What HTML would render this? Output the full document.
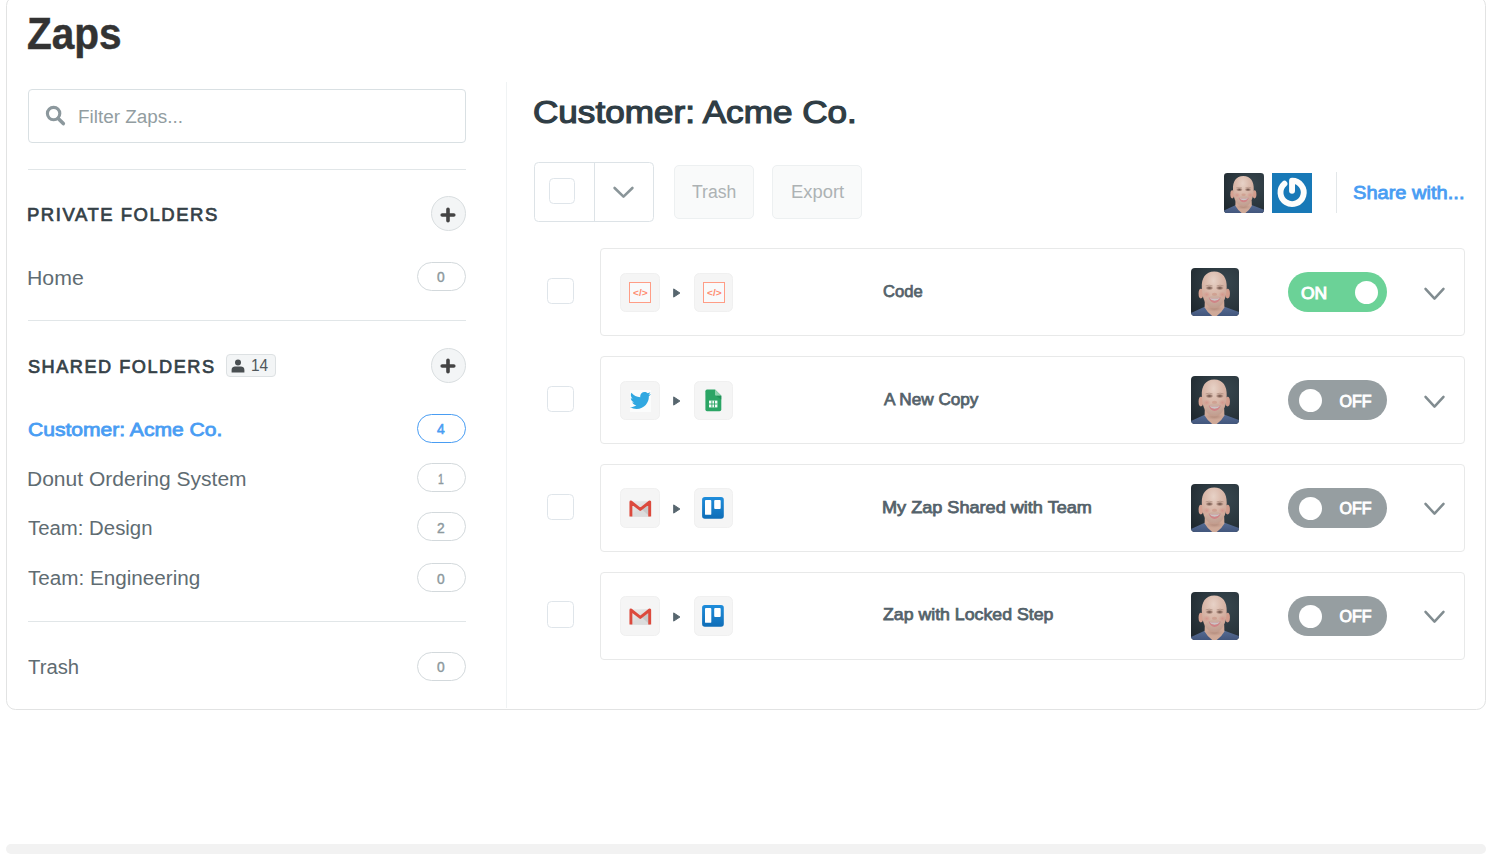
<!DOCTYPE html>
<html lang="en">
<head>
<meta charset="utf-8">
<title>Zaps</title>
<style>
html,body{margin:0;padding:0;background:#fff;}
body{width:1498px;height:856px;position:relative;overflow:hidden;font-family:"Liberation Sans",sans-serif;}
.abs,.t,.card,.hr,.vr,.plus,.badge,.cb,.row,.app,.tog,.knob,.btn,.bar,svg{position:absolute;box-sizing:border-box;}
.t{white-space:nowrap;line-height:1;transform-origin:0 0;}
.card{left:6px;top:-4px;width:1479.8px;height:714px;border:1.9px solid #e2e3e3;border-radius:9.5px;background:#fff;}
.hr{left:28px;width:438px;height:1.4px;background:#e1e6e8;}
.vr{left:505.9px;top:82px;width:1.3px;height:626px;background:#f0f3f4;}
.search{left:28px;top:89px;width:438px;height:54px;border:1.3px solid #d9e0e3;border-radius:4px;background:#fff;}
.plus{left:431px;width:35px;height:35px;border-radius:50%;background:#f3f5f6;border:1.2px solid #d9dee0;}
.badge{left:416.8px;width:49px;height:29.3px;border-radius:15px;border:1.3px solid #d3d9dc;background:#fff;}
.badge.act{border:1.6px solid #499df3;}
.cb{width:26.6px;height:26.6px;border:1.6px solid #dfe5ea;border-radius:4.5px;background:#fff;}
.row{left:600.1px;width:865.1px;height:88.3px;border:1.8px solid #e8e9e9;border-radius:4px;background:#fff;}
.app{width:39.4px;height:39.4px;border-radius:5.5px;background:#f5f5f5;border:1px solid #f0f0f0;}
.tog{left:1288px;width:99px;height:40px;border-radius:20px;background:#969ea1;}
.tog.on{background:#6bd297;}
.knob{width:23px;height:23px;border-radius:50%;background:#fff;}
.btn{top:164.8px;height:54px;border-radius:5px;background:#f9fafa;border:1.4px solid #edf0f1;}
.bar{left:6px;top:844px;width:1480px;height:10px;border-radius:5px;background:#f2f2f2;}
</style>
</head>
<body>
<div class="card"></div>
<div class="vr"></div>
<div class="bar"></div>
<div class="search abs"></div>
<svg style="left:44px;top:104px" width="24" height="24" viewBox="0 0 24 24"><circle cx="9.6" cy="9.6" r="6.2" fill="none" stroke="#8c989d" stroke-width="3.1"/><path d="M14.2 14.4 L19.3 19.6" stroke="#8c989d" stroke-width="3.6" stroke-linecap="round"/></svg>
<div class="hr" style="top:168.6px"></div>
<div class="hr" style="top:320px"></div>
<div class="hr" style="top:621px"></div>
<div class="plus" style="top:196.2px"></div>
<svg style="left:440px;top:206.5px" width="16" height="16" viewBox="0 0 16 16"><path d="M8 2.2V13.8M2.2 8H13.8" stroke="#444" stroke-width="3.6" stroke-linecap="round"/></svg>
<div class="plus" style="top:348px"></div>
<svg style="left:440px;top:358.3px" width="16" height="16" viewBox="0 0 16 16"><path d="M8 2.2V13.8M2.2 8H13.8" stroke="#444" stroke-width="3.6" stroke-linecap="round"/></svg>
<div class="badge" style="top:261.7px"></div>
<div class="badge act" style="top:413.6px"></div>
<div class="badge" style="top:463.1px"></div>
<div class="badge" style="top:512.1px"></div>
<div class="badge" style="top:563.1px"></div>
<div class="badge" style="top:651.7px"></div>
<div class="abs" style="left:225.5px;top:354.3px;width:50px;height:23px;background:#f3f5f6;border:1.2px solid #dde1e3;border-radius:4px"></div>
<svg style="left:231px;top:358.5px" width="14" height="14" viewBox="0 0 14 14"><circle cx="7" cy="3.6" r="3" fill="#4a4f52"/><path d="M0.6 13.4 V11 C0.6 8.6 2.4 7.6 4 7.6 H10 C11.6 7.6 13.4 8.6 13.4 11 V13.4 Z" fill="#4a4f52"/></svg>

<div class="abs" style="left:534px;top:162.1px;width:119.6px;height:59.8px;border:1.6px solid #dde3e7;border-radius:4.5px;background:#fff"></div>
<div class="abs" style="left:593.6px;top:163px;width:1.5px;height:58px;background:#dde3e7"></div>
<div class="cb" style="left:548.6px;top:177.9px"></div>
<svg style="left:611px;top:184px" width="25" height="17" viewBox="0 0 25 17"><path d="M3.6 4 L12.5 12.6 L21.4 4" fill="none" stroke="#8a9599" stroke-width="2.6" stroke-linecap="round" stroke-linejoin="round"/></svg>
<div class="btn" style="left:673.8px;width:80.6px"></div>
<div class="btn" style="left:772.3px;width:89.8px"></div>
<div class="abs" style="left:1335.8px;top:172.4px;width:1.2px;height:40.2px;background:#e3e7e9"></div>
<svg style="left:1224.2px;top:172.7px" width="40" height="40" viewBox="0 0 48 48">
<defs><clipPath id="ch"><rect x="0" y="0" width="48" height="48" rx="4" ry="4"/></clipPath>
<radialGradient id="gh" cx="0.7" cy="0.3" r="0.85"><stop offset="0" stop-color="#37464e"/><stop offset="0.6" stop-color="#2b373e"/><stop offset="1" stop-color="#20292f"/></radialGradient>
<radialGradient id="sh" cx="0.47" cy="0.24" r="0.8"><stop offset="0" stop-color="#e7d2c7"/><stop offset="0.35" stop-color="#dcbdaf"/><stop offset="0.75" stop-color="#d0aa9b"/><stop offset="1" stop-color="#bd9687"/></radialGradient>
<radialGradient id="eh"><stop offset="0" stop-color="#5e443b" stop-opacity="0.95"/><stop offset="0.55" stop-color="#7a5a4f" stop-opacity="0.6"/><stop offset="1" stop-color="#a88171" stop-opacity="0"/></radialGradient>
<radialGradient id="kh"><stop offset="0" stop-color="#d48e86" stop-opacity="0.75"/><stop offset="1" stop-color="#d69b8f" stop-opacity="0"/></radialGradient>
<radialGradient id="nh"><stop offset="0" stop-color="#a47c6d" stop-opacity="0.75"/><stop offset="1" stop-color="#b98f80" stop-opacity="0"/></radialGradient>
<linearGradient id="th" x1="0" y1="0" x2="0" y2="1"><stop offset="0" stop-color="#566c94"/><stop offset="1" stop-color="#3e5177"/></linearGradient></defs>
<g clip-path="url(#ch)"><rect width="48" height="48" fill="url(#gh)"/>
<path d="M-2 50 L-1 45.6 Q7 41.6 14.2 38.4 L23.6 46 L33 38.4 Q40.6 41.2 49 44.4 L50 50 Z" fill="url(#th)"/>
<path d="M13.8 33 L13.6 39.4 Q17 45.5 23.4 49.5 Q30.2 45.5 33.4 39.4 L33.2 33 Z" fill="#cfa998"/>
<ellipse cx="23.4" cy="40.6" rx="9.4" ry="3.4" fill="url(#nh)"/>
<ellipse cx="9.9" cy="25.6" rx="2.3" ry="4.9" fill="#d6a292"/>
<ellipse cx="36.6" cy="25.6" rx="2.3" ry="4.9" fill="#d29c8c"/>
<path d="M23.2 3.6 C14.4 3.6 10.4 10.4 10.8 19.6 C11.1 27.8 12.6 33 16.2 37 C18.8 39.9 21.4 40.8 23.3 40.8 C25.2 40.8 27.9 39.9 30.4 37 C33.9 33 35.4 27.8 35.7 19.6 C36.1 10.4 32 3.6 23.2 3.6 Z" fill="url(#sh)"/>
<ellipse cx="18.4" cy="20" rx="4.2" ry="2.3" fill="url(#eh)"/>
<ellipse cx="28.8" cy="20" rx="4.2" ry="2.3" fill="url(#eh)"/>
<path d="M14.6 17.9 Q18.2 16.5 21.6 17.9 M25.6 17.9 Q29 16.5 32.6 17.9" stroke="#8a6a5c" stroke-width="0.8" fill="none" opacity="0.55"/>
<ellipse cx="15.8" cy="26.6" rx="4" ry="3.4" fill="url(#kh)"/>
<ellipse cx="31.4" cy="26.6" rx="4" ry="3.4" fill="url(#kh)"/>
<ellipse cx="23.5" cy="26.2" rx="2.6" ry="1.5" fill="#c98f7f" opacity="0.55"/>
<ellipse cx="23.6" cy="33.2" rx="8.4" ry="5.6" fill="#b7a097" opacity="0.28"/>
<path d="M17.6 29.6 Q23.6 31.4 29.8 29.6 Q27.8 35 23.6 35 Q19.6 35 17.6 29.6 Z" fill="#cf8487"/>
<path d="M18.4 29.9 Q23.6 31.3 29 29.9 Q27 32.7 23.6 32.7 Q20.4 32.7 18.4 29.9 Z" fill="#ccc4c5"/>
</g></svg><svg style="left:1272.2px;top:172.5px" width="40.1" height="40.1" viewBox="0 0 40 40"><rect width="40" height="40" fill="#1879b7"/><path d="M20.0 17.8 V7.8 A11.6 11.6 0 1 1 12.4 10.7" fill="none" stroke="#fdfdfb" stroke-width="5.9" stroke-linecap="round" stroke-linejoin="round"/></svg>
<div class="cb" style="left:547.4px;top:277.90px"></div>
<div class="row" style="top:248.10px"></div>
<div class="app" style="left:620.4px;top:272.80px"></div>
<div class="abs" style="left:629.3px;top:281.60px;width:21.9px;height:21.7px;border:1.3px solid #ff9d86;background:#f9fafb"></div><span class="t" style="left:633.1px;top:288.70px;font-size:9px;font-weight:700;color:#ff8c70;letter-spacing:0px;transform:scaleX(1.12)">&lt;/&gt;</span>
<svg style="left:672px;top:287.1px" width="10" height="12" viewBox="0 0 10 12"><path d="M1.7 1.9 L7.9 6 L1.7 10.1 Z" fill="#57666e" stroke="#57666e" stroke-width="1" stroke-linejoin="round"/></svg>
<div class="app" style="left:693.8px;top:272.80px"></div>
<div class="abs" style="left:702.6999999999999px;top:281.60px;width:21.9px;height:21.7px;border:1.3px solid #ff9d86;background:#f9fafb"></div><span class="t" style="left:706.5px;top:288.70px;font-size:9px;font-weight:700;color:#ff8c70;letter-spacing:0px;transform:scaleX(1.12)">&lt;/&gt;</span>
<svg style="left:1191px;top:268.4px" width="48" height="48" viewBox="0 0 48 48">
<defs><clipPath id="cr0"><rect x="0" y="0" width="48" height="48" rx="4" ry="4"/></clipPath>
<radialGradient id="gr0" cx="0.7" cy="0.3" r="0.85"><stop offset="0" stop-color="#37464e"/><stop offset="0.6" stop-color="#2b373e"/><stop offset="1" stop-color="#20292f"/></radialGradient>
<radialGradient id="sr0" cx="0.47" cy="0.24" r="0.8"><stop offset="0" stop-color="#e7d2c7"/><stop offset="0.35" stop-color="#dcbdaf"/><stop offset="0.75" stop-color="#d0aa9b"/><stop offset="1" stop-color="#bd9687"/></radialGradient>
<radialGradient id="er0"><stop offset="0" stop-color="#5e443b" stop-opacity="0.95"/><stop offset="0.55" stop-color="#7a5a4f" stop-opacity="0.6"/><stop offset="1" stop-color="#a88171" stop-opacity="0"/></radialGradient>
<radialGradient id="kr0"><stop offset="0" stop-color="#d48e86" stop-opacity="0.75"/><stop offset="1" stop-color="#d69b8f" stop-opacity="0"/></radialGradient>
<radialGradient id="nr0"><stop offset="0" stop-color="#a47c6d" stop-opacity="0.75"/><stop offset="1" stop-color="#b98f80" stop-opacity="0"/></radialGradient>
<linearGradient id="tr0" x1="0" y1="0" x2="0" y2="1"><stop offset="0" stop-color="#566c94"/><stop offset="1" stop-color="#3e5177"/></linearGradient></defs>
<g clip-path="url(#cr0)"><rect width="48" height="48" fill="url(#gr0)"/>
<path d="M-2 50 L-1 45.6 Q7 41.6 14.2 38.4 L23.6 46 L33 38.4 Q40.6 41.2 49 44.4 L50 50 Z" fill="url(#tr0)"/>
<path d="M13.8 33 L13.6 39.4 Q17 45.5 23.4 49.5 Q30.2 45.5 33.4 39.4 L33.2 33 Z" fill="#cfa998"/>
<ellipse cx="23.4" cy="40.6" rx="9.4" ry="3.4" fill="url(#nr0)"/>
<ellipse cx="9.9" cy="25.6" rx="2.3" ry="4.9" fill="#d6a292"/>
<ellipse cx="36.6" cy="25.6" rx="2.3" ry="4.9" fill="#d29c8c"/>
<path d="M23.2 3.6 C14.4 3.6 10.4 10.4 10.8 19.6 C11.1 27.8 12.6 33 16.2 37 C18.8 39.9 21.4 40.8 23.3 40.8 C25.2 40.8 27.9 39.9 30.4 37 C33.9 33 35.4 27.8 35.7 19.6 C36.1 10.4 32 3.6 23.2 3.6 Z" fill="url(#sr0)"/>
<ellipse cx="18.4" cy="20" rx="4.2" ry="2.3" fill="url(#er0)"/>
<ellipse cx="28.8" cy="20" rx="4.2" ry="2.3" fill="url(#er0)"/>
<path d="M14.6 17.9 Q18.2 16.5 21.6 17.9 M25.6 17.9 Q29 16.5 32.6 17.9" stroke="#8a6a5c" stroke-width="0.8" fill="none" opacity="0.55"/>
<ellipse cx="15.8" cy="26.6" rx="4" ry="3.4" fill="url(#kr0)"/>
<ellipse cx="31.4" cy="26.6" rx="4" ry="3.4" fill="url(#kr0)"/>
<ellipse cx="23.5" cy="26.2" rx="2.6" ry="1.5" fill="#c98f7f" opacity="0.55"/>
<ellipse cx="23.6" cy="33.2" rx="8.4" ry="5.6" fill="#b7a097" opacity="0.28"/>
<path d="M17.6 29.6 Q23.6 31.4 29.8 29.6 Q27.8 35 23.6 35 Q19.6 35 17.6 29.6 Z" fill="#cf8487"/>
<path d="M18.4 29.9 Q23.6 31.3 29 29.9 Q27 32.7 23.6 32.7 Q20.4 32.7 18.4 29.9 Z" fill="#ccc4c5"/>
</g></svg>
<div class="tog on" style="top:272.30px"></div>
<div class="knob" style="left:1354.8px;top:281.30px"></div>
<svg style="left:1422px;top:284.7px" width="25" height="17" viewBox="0 0 25 17"><path d="M3.5 3.8 L12.5 13.7 L21.5 3.8" fill="none" stroke="#818c90" stroke-width="2.5" stroke-linecap="round" stroke-linejoin="round"/></svg>
<div class="cb" style="left:547.4px;top:385.70px"></div>
<div class="row" style="top:355.90px"></div>
<div class="app" style="left:620.4px;top:380.60px"></div>
<div class="abs" style="left:629.6999999999999px;top:389.6px;width:21.8px;height:22px;background:#fbfcfc"></div><svg style="left:630.0px;top:390.20000000000005px" width="21" height="21" viewBox="0 0 24 24"><path d="M23.954 4.569c-.885.389-1.83.654-2.825.775 1.014-.611 1.794-1.574 2.163-2.723-.951.555-2.005.959-3.127 1.184-.896-.959-2.173-1.559-3.591-1.559-2.717 0-4.92 2.203-4.92 4.917 0 .39.045.765.127 1.124C7.691 8.094 4.066 6.13 1.64 3.161c-.427.722-.666 1.561-.666 2.475 0 1.71.87 3.213 2.188 4.096-.807-.026-1.566-.248-2.228-.616v.061c0 2.385 1.693 4.374 3.946 4.827-.413.111-.849.171-1.296.171-.314 0-.615-.03-.916-.086.631 1.953 2.445 3.377 4.604 3.417-1.68 1.319-3.809 2.105-6.102 2.105-.39 0-.779-.023-1.17-.067 2.189 1.394 4.768 2.209 7.557 2.209 9.054 0 13.999-7.496 13.999-13.986 0-.209 0-.42-.015-.63.961-.689 1.8-1.56 2.46-2.548l-.047-.02z" fill="#31a8e1"/></svg>
<svg style="left:672px;top:394.9px" width="10" height="12" viewBox="0 0 10 12"><path d="M1.7 1.9 L7.9 6 L1.7 10.1 Z" fill="#57666e" stroke="#57666e" stroke-width="1" stroke-linejoin="round"/></svg>
<div class="app" style="left:693.8px;top:380.60px"></div>
<svg style="left:705.3px;top:389.20000000000005px" width="17" height="23" viewBox="0 0 17 23"><path d="M2 0.6 H10 L16.3 6.8 V20.6 Q16.3 22.3 14.6 22.3 H2 Q0.4 22.3 0.4 20.6 V2.2 Q0.4 0.6 2 0.6 Z" fill="#2ba565"/><path d="M10 0.6 L16.3 6.8 H11.4 Q10 6.8 10 5.4 Z" fill="#8fd3ae"/><path d="M11 6.8 H16.3 V10.6 Z" fill="#1e8a52" opacity="0.7"/><rect x="4" y="11.6" width="8.4" height="6.8" fill="#f4fbf7"/><path d="M6.9 11.6 V18.4 M9.5 11.6 V18.4 M4 15 H12.4" stroke="#2ba565" stroke-width="0.9"/></svg>
<svg style="left:1191px;top:376.2px" width="48" height="48" viewBox="0 0 48 48">
<defs><clipPath id="cr1"><rect x="0" y="0" width="48" height="48" rx="4" ry="4"/></clipPath>
<radialGradient id="gr1" cx="0.7" cy="0.3" r="0.85"><stop offset="0" stop-color="#37464e"/><stop offset="0.6" stop-color="#2b373e"/><stop offset="1" stop-color="#20292f"/></radialGradient>
<radialGradient id="sr1" cx="0.47" cy="0.24" r="0.8"><stop offset="0" stop-color="#e7d2c7"/><stop offset="0.35" stop-color="#dcbdaf"/><stop offset="0.75" stop-color="#d0aa9b"/><stop offset="1" stop-color="#bd9687"/></radialGradient>
<radialGradient id="er1"><stop offset="0" stop-color="#5e443b" stop-opacity="0.95"/><stop offset="0.55" stop-color="#7a5a4f" stop-opacity="0.6"/><stop offset="1" stop-color="#a88171" stop-opacity="0"/></radialGradient>
<radialGradient id="kr1"><stop offset="0" stop-color="#d48e86" stop-opacity="0.75"/><stop offset="1" stop-color="#d69b8f" stop-opacity="0"/></radialGradient>
<radialGradient id="nr1"><stop offset="0" stop-color="#a47c6d" stop-opacity="0.75"/><stop offset="1" stop-color="#b98f80" stop-opacity="0"/></radialGradient>
<linearGradient id="tr1" x1="0" y1="0" x2="0" y2="1"><stop offset="0" stop-color="#566c94"/><stop offset="1" stop-color="#3e5177"/></linearGradient></defs>
<g clip-path="url(#cr1)"><rect width="48" height="48" fill="url(#gr1)"/>
<path d="M-2 50 L-1 45.6 Q7 41.6 14.2 38.4 L23.6 46 L33 38.4 Q40.6 41.2 49 44.4 L50 50 Z" fill="url(#tr1)"/>
<path d="M13.8 33 L13.6 39.4 Q17 45.5 23.4 49.5 Q30.2 45.5 33.4 39.4 L33.2 33 Z" fill="#cfa998"/>
<ellipse cx="23.4" cy="40.6" rx="9.4" ry="3.4" fill="url(#nr1)"/>
<ellipse cx="9.9" cy="25.6" rx="2.3" ry="4.9" fill="#d6a292"/>
<ellipse cx="36.6" cy="25.6" rx="2.3" ry="4.9" fill="#d29c8c"/>
<path d="M23.2 3.6 C14.4 3.6 10.4 10.4 10.8 19.6 C11.1 27.8 12.6 33 16.2 37 C18.8 39.9 21.4 40.8 23.3 40.8 C25.2 40.8 27.9 39.9 30.4 37 C33.9 33 35.4 27.8 35.7 19.6 C36.1 10.4 32 3.6 23.2 3.6 Z" fill="url(#sr1)"/>
<ellipse cx="18.4" cy="20" rx="4.2" ry="2.3" fill="url(#er1)"/>
<ellipse cx="28.8" cy="20" rx="4.2" ry="2.3" fill="url(#er1)"/>
<path d="M14.6 17.9 Q18.2 16.5 21.6 17.9 M25.6 17.9 Q29 16.5 32.6 17.9" stroke="#8a6a5c" stroke-width="0.8" fill="none" opacity="0.55"/>
<ellipse cx="15.8" cy="26.6" rx="4" ry="3.4" fill="url(#kr1)"/>
<ellipse cx="31.4" cy="26.6" rx="4" ry="3.4" fill="url(#kr1)"/>
<ellipse cx="23.5" cy="26.2" rx="2.6" ry="1.5" fill="#c98f7f" opacity="0.55"/>
<ellipse cx="23.6" cy="33.2" rx="8.4" ry="5.6" fill="#b7a097" opacity="0.28"/>
<path d="M17.6 29.6 Q23.6 31.4 29.8 29.6 Q27.8 35 23.6 35 Q19.6 35 17.6 29.6 Z" fill="#cf8487"/>
<path d="M18.4 29.9 Q23.6 31.3 29 29.9 Q27 32.7 23.6 32.7 Q20.4 32.7 18.4 29.9 Z" fill="#ccc4c5"/>
</g></svg>
<div class="tog" style="top:380.10px"></div>
<div class="knob" style="left:1298.8px;top:389.10px"></div>
<svg style="left:1422px;top:392.5px" width="25" height="17" viewBox="0 0 25 17"><path d="M3.5 3.8 L12.5 13.7 L21.5 3.8" fill="none" stroke="#818c90" stroke-width="2.5" stroke-linecap="round" stroke-linejoin="round"/></svg>
<div class="cb" style="left:547.4px;top:493.50px"></div>
<div class="row" style="top:463.70px"></div>
<div class="app" style="left:620.4px;top:488.40px"></div>
<svg style="left:629.4px;top:497.90px" width="23" height="22" viewBox="0 0 23 22"><defs><linearGradient id="gm488" x1="0" y1="0" x2="1" y2="1"><stop offset="0" stop-color="#ededed"/><stop offset="1" stop-color="#cfcfcf"/></linearGradient></defs>
<rect x="1.6" y="3.2" width="19.4" height="15.4" fill="url(#gm488)"/><path d="M1.6 18.6 L11.3 10.4 L21 18.6 Z" fill="#dcdcdc"/><path d="M21 18.6 L13 11.5 L21 5 Z" fill="#c9c9c9"/>
<path d="M1.9 18.4 V4 L11.3 11.4 L20.7 4 V18.4" fill="none" stroke="#dc4a3d" stroke-width="2.9" stroke-linejoin="round" stroke-linecap="butt"/></svg>
<svg style="left:672px;top:502.7px" width="10" height="12" viewBox="0 0 10 12"><path d="M1.7 1.9 L7.9 6 L1.7 10.1 Z" fill="#57666e" stroke="#57666e" stroke-width="1" stroke-linejoin="round"/></svg>
<div class="app" style="left:693.8px;top:488.40px"></div>
<svg style="left:702.40px;top:497.30px" width="22" height="22" viewBox="0 0 22 22"><defs><linearGradient id="tr488" x1="0" y1="0" x2="0" y2="1"><stop offset="0" stop-color="#1f8ddb"/><stop offset="1" stop-color="#0f6db7"/></linearGradient></defs><rect x="0.1" y="0.1" width="21.7" height="21.7" rx="2.8" fill="url(#tr488)"/><rect x="3" y="3" width="6.3" height="14.8" rx="0.9" fill="#fff"/><rect x="12.2" y="3" width="6.5" height="8.9" rx="0.9" fill="#fff"/></svg>
<svg style="left:1191px;top:484.0px" width="48" height="48" viewBox="0 0 48 48">
<defs><clipPath id="cr2"><rect x="0" y="0" width="48" height="48" rx="4" ry="4"/></clipPath>
<radialGradient id="gr2" cx="0.7" cy="0.3" r="0.85"><stop offset="0" stop-color="#37464e"/><stop offset="0.6" stop-color="#2b373e"/><stop offset="1" stop-color="#20292f"/></radialGradient>
<radialGradient id="sr2" cx="0.47" cy="0.24" r="0.8"><stop offset="0" stop-color="#e7d2c7"/><stop offset="0.35" stop-color="#dcbdaf"/><stop offset="0.75" stop-color="#d0aa9b"/><stop offset="1" stop-color="#bd9687"/></radialGradient>
<radialGradient id="er2"><stop offset="0" stop-color="#5e443b" stop-opacity="0.95"/><stop offset="0.55" stop-color="#7a5a4f" stop-opacity="0.6"/><stop offset="1" stop-color="#a88171" stop-opacity="0"/></radialGradient>
<radialGradient id="kr2"><stop offset="0" stop-color="#d48e86" stop-opacity="0.75"/><stop offset="1" stop-color="#d69b8f" stop-opacity="0"/></radialGradient>
<radialGradient id="nr2"><stop offset="0" stop-color="#a47c6d" stop-opacity="0.75"/><stop offset="1" stop-color="#b98f80" stop-opacity="0"/></radialGradient>
<linearGradient id="tr2" x1="0" y1="0" x2="0" y2="1"><stop offset="0" stop-color="#566c94"/><stop offset="1" stop-color="#3e5177"/></linearGradient></defs>
<g clip-path="url(#cr2)"><rect width="48" height="48" fill="url(#gr2)"/>
<path d="M-2 50 L-1 45.6 Q7 41.6 14.2 38.4 L23.6 46 L33 38.4 Q40.6 41.2 49 44.4 L50 50 Z" fill="url(#tr2)"/>
<path d="M13.8 33 L13.6 39.4 Q17 45.5 23.4 49.5 Q30.2 45.5 33.4 39.4 L33.2 33 Z" fill="#cfa998"/>
<ellipse cx="23.4" cy="40.6" rx="9.4" ry="3.4" fill="url(#nr2)"/>
<ellipse cx="9.9" cy="25.6" rx="2.3" ry="4.9" fill="#d6a292"/>
<ellipse cx="36.6" cy="25.6" rx="2.3" ry="4.9" fill="#d29c8c"/>
<path d="M23.2 3.6 C14.4 3.6 10.4 10.4 10.8 19.6 C11.1 27.8 12.6 33 16.2 37 C18.8 39.9 21.4 40.8 23.3 40.8 C25.2 40.8 27.9 39.9 30.4 37 C33.9 33 35.4 27.8 35.7 19.6 C36.1 10.4 32 3.6 23.2 3.6 Z" fill="url(#sr2)"/>
<ellipse cx="18.4" cy="20" rx="4.2" ry="2.3" fill="url(#er2)"/>
<ellipse cx="28.8" cy="20" rx="4.2" ry="2.3" fill="url(#er2)"/>
<path d="M14.6 17.9 Q18.2 16.5 21.6 17.9 M25.6 17.9 Q29 16.5 32.6 17.9" stroke="#8a6a5c" stroke-width="0.8" fill="none" opacity="0.55"/>
<ellipse cx="15.8" cy="26.6" rx="4" ry="3.4" fill="url(#kr2)"/>
<ellipse cx="31.4" cy="26.6" rx="4" ry="3.4" fill="url(#kr2)"/>
<ellipse cx="23.5" cy="26.2" rx="2.6" ry="1.5" fill="#c98f7f" opacity="0.55"/>
<ellipse cx="23.6" cy="33.2" rx="8.4" ry="5.6" fill="#b7a097" opacity="0.28"/>
<path d="M17.6 29.6 Q23.6 31.4 29.8 29.6 Q27.8 35 23.6 35 Q19.6 35 17.6 29.6 Z" fill="#cf8487"/>
<path d="M18.4 29.9 Q23.6 31.3 29 29.9 Q27 32.7 23.6 32.7 Q20.4 32.7 18.4 29.9 Z" fill="#ccc4c5"/>
</g></svg>
<div class="tog" style="top:487.90px"></div>
<div class="knob" style="left:1298.8px;top:496.90px"></div>
<svg style="left:1422px;top:500.3px" width="25" height="17" viewBox="0 0 25 17"><path d="M3.5 3.8 L12.5 13.7 L21.5 3.8" fill="none" stroke="#818c90" stroke-width="2.5" stroke-linecap="round" stroke-linejoin="round"/></svg>
<div class="cb" style="left:547.4px;top:601.30px"></div>
<div class="row" style="top:571.50px"></div>
<div class="app" style="left:620.4px;top:596.20px"></div>
<svg style="left:629.4px;top:605.70px" width="23" height="22" viewBox="0 0 23 22"><defs><linearGradient id="gm596" x1="0" y1="0" x2="1" y2="1"><stop offset="0" stop-color="#ededed"/><stop offset="1" stop-color="#cfcfcf"/></linearGradient></defs>
<rect x="1.6" y="3.2" width="19.4" height="15.4" fill="url(#gm596)"/><path d="M1.6 18.6 L11.3 10.4 L21 18.6 Z" fill="#dcdcdc"/><path d="M21 18.6 L13 11.5 L21 5 Z" fill="#c9c9c9"/>
<path d="M1.9 18.4 V4 L11.3 11.4 L20.7 4 V18.4" fill="none" stroke="#dc4a3d" stroke-width="2.9" stroke-linejoin="round" stroke-linecap="butt"/></svg>
<svg style="left:672px;top:610.5px" width="10" height="12" viewBox="0 0 10 12"><path d="M1.7 1.9 L7.9 6 L1.7 10.1 Z" fill="#57666e" stroke="#57666e" stroke-width="1" stroke-linejoin="round"/></svg>
<div class="app" style="left:693.8px;top:596.20px"></div>
<svg style="left:702.40px;top:605.10px" width="22" height="22" viewBox="0 0 22 22"><defs><linearGradient id="tr596" x1="0" y1="0" x2="0" y2="1"><stop offset="0" stop-color="#1f8ddb"/><stop offset="1" stop-color="#0f6db7"/></linearGradient></defs><rect x="0.1" y="0.1" width="21.7" height="21.7" rx="2.8" fill="url(#tr596)"/><rect x="3" y="3" width="6.3" height="14.8" rx="0.9" fill="#fff"/><rect x="12.2" y="3" width="6.5" height="8.9" rx="0.9" fill="#fff"/></svg>
<svg style="left:1191px;top:591.8px" width="48" height="48" viewBox="0 0 48 48">
<defs><clipPath id="cr3"><rect x="0" y="0" width="48" height="48" rx="4" ry="4"/></clipPath>
<radialGradient id="gr3" cx="0.7" cy="0.3" r="0.85"><stop offset="0" stop-color="#37464e"/><stop offset="0.6" stop-color="#2b373e"/><stop offset="1" stop-color="#20292f"/></radialGradient>
<radialGradient id="sr3" cx="0.47" cy="0.24" r="0.8"><stop offset="0" stop-color="#e7d2c7"/><stop offset="0.35" stop-color="#dcbdaf"/><stop offset="0.75" stop-color="#d0aa9b"/><stop offset="1" stop-color="#bd9687"/></radialGradient>
<radialGradient id="er3"><stop offset="0" stop-color="#5e443b" stop-opacity="0.95"/><stop offset="0.55" stop-color="#7a5a4f" stop-opacity="0.6"/><stop offset="1" stop-color="#a88171" stop-opacity="0"/></radialGradient>
<radialGradient id="kr3"><stop offset="0" stop-color="#d48e86" stop-opacity="0.75"/><stop offset="1" stop-color="#d69b8f" stop-opacity="0"/></radialGradient>
<radialGradient id="nr3"><stop offset="0" stop-color="#a47c6d" stop-opacity="0.75"/><stop offset="1" stop-color="#b98f80" stop-opacity="0"/></radialGradient>
<linearGradient id="tr3" x1="0" y1="0" x2="0" y2="1"><stop offset="0" stop-color="#566c94"/><stop offset="1" stop-color="#3e5177"/></linearGradient></defs>
<g clip-path="url(#cr3)"><rect width="48" height="48" fill="url(#gr3)"/>
<path d="M-2 50 L-1 45.6 Q7 41.6 14.2 38.4 L23.6 46 L33 38.4 Q40.6 41.2 49 44.4 L50 50 Z" fill="url(#tr3)"/>
<path d="M13.8 33 L13.6 39.4 Q17 45.5 23.4 49.5 Q30.2 45.5 33.4 39.4 L33.2 33 Z" fill="#cfa998"/>
<ellipse cx="23.4" cy="40.6" rx="9.4" ry="3.4" fill="url(#nr3)"/>
<ellipse cx="9.9" cy="25.6" rx="2.3" ry="4.9" fill="#d6a292"/>
<ellipse cx="36.6" cy="25.6" rx="2.3" ry="4.9" fill="#d29c8c"/>
<path d="M23.2 3.6 C14.4 3.6 10.4 10.4 10.8 19.6 C11.1 27.8 12.6 33 16.2 37 C18.8 39.9 21.4 40.8 23.3 40.8 C25.2 40.8 27.9 39.9 30.4 37 C33.9 33 35.4 27.8 35.7 19.6 C36.1 10.4 32 3.6 23.2 3.6 Z" fill="url(#sr3)"/>
<ellipse cx="18.4" cy="20" rx="4.2" ry="2.3" fill="url(#er3)"/>
<ellipse cx="28.8" cy="20" rx="4.2" ry="2.3" fill="url(#er3)"/>
<path d="M14.6 17.9 Q18.2 16.5 21.6 17.9 M25.6 17.9 Q29 16.5 32.6 17.9" stroke="#8a6a5c" stroke-width="0.8" fill="none" opacity="0.55"/>
<ellipse cx="15.8" cy="26.6" rx="4" ry="3.4" fill="url(#kr3)"/>
<ellipse cx="31.4" cy="26.6" rx="4" ry="3.4" fill="url(#kr3)"/>
<ellipse cx="23.5" cy="26.2" rx="2.6" ry="1.5" fill="#c98f7f" opacity="0.55"/>
<ellipse cx="23.6" cy="33.2" rx="8.4" ry="5.6" fill="#b7a097" opacity="0.28"/>
<path d="M17.6 29.6 Q23.6 31.4 29.8 29.6 Q27.8 35 23.6 35 Q19.6 35 17.6 29.6 Z" fill="#cf8487"/>
<path d="M18.4 29.9 Q23.6 31.3 29 29.9 Q27 32.7 23.6 32.7 Q20.4 32.7 18.4 29.9 Z" fill="#ccc4c5"/>
</g></svg>
<div class="tog" style="top:595.70px"></div>
<div class="knob" style="left:1298.8px;top:604.70px"></div>
<svg style="left:1422px;top:608.1px" width="25" height="17" viewBox="0 0 25 17"><path d="M3.5 3.8 L12.5 13.7 L21.5 3.8" fill="none" stroke="#818c90" stroke-width="2.5" stroke-linecap="round" stroke-linejoin="round"/></svg>

<span class="t" style="left:27.08px;top:11.50px;font-size:44px;font-weight:700;color:#333333;letter-spacing:0px;-webkit-text-stroke:0.5px #333333;transform:scaleX(0.9208)">Zaps</span>
<span class="t" style="left:77.85px;top:108.16px;font-size:18px;font-weight:400;color:#929da1;letter-spacing:0px;transform:scaleX(1.0490)">Filter Zaps...</span>
<span class="t" style="left:27.37px;top:206.41px;font-size:18px;font-weight:400;color:#354147;letter-spacing:1.5px;-webkit-text-stroke:0.7px #354147;transform:scaleX(1.0261)">PRIVATE FOLDERS</span>
<span class="t" style="left:27.34px;top:268.17px;font-size:20px;font-weight:400;color:#5f6c72;letter-spacing:0px;transform:scaleX(1.0635)">Home</span>
<span class="t" style="left:27.80px;top:358.21px;font-size:18px;font-weight:400;color:#354147;letter-spacing:1.5px;-webkit-text-stroke:0.7px #354147;transform:scaleX(1.0081)">SHARED FOLDERS</span>
<span class="t" style="left:251.04px;top:357.86px;font-size:16px;font-weight:400;color:#50575b;letter-spacing:0px;transform:scaleX(0.9647)">14</span>
<span class="t" style="left:28.40px;top:419.52px;font-size:19px;font-weight:400;color:#499df3;letter-spacing:0px;-webkit-text-stroke:0.8px #499df3;transform:scaleX(1.1086)">Customer: Acme Co.</span>
<span class="t" style="left:27.35px;top:468.57px;font-size:20px;font-weight:400;color:#5f6c72;letter-spacing:0px;transform:scaleX(1.0507)">Donut Ordering System</span>
<span class="t" style="left:28.40px;top:517.67px;font-size:20px;font-weight:400;color:#5f6c72;letter-spacing:0px;transform:scaleX(1.0180)">Team: Design</span>
<span class="t" style="left:28.40px;top:568.47px;font-size:20px;font-weight:400;color:#5f6c72;letter-spacing:0px;transform:scaleX(1.0331)">Team: Engineering</span>
<span class="t" style="left:28.40px;top:657.27px;font-size:20px;font-weight:400;color:#5f6c72;letter-spacing:0px;transform:scaleX(1.0140)">Trash</span>
<span class="t" style="left:437.20px;top:269.45px;font-size:15.5px;font-weight:400;color:#8d999e;letter-spacing:0px;-webkit-text-stroke:0.45px #8d999e;transform:scaleX(0.8889)">0</span>
<span class="t" style="left:437.20px;top:421.28px;font-size:15.5px;font-weight:400;color:#499df3;letter-spacing:0px;-webkit-text-stroke:0.6px #499df3;transform:scaleX(0.8889)">4</span>
<span class="t" style="left:437.52px;top:470.85px;font-size:15.5px;font-weight:400;color:#8d999e;letter-spacing:0px;-webkit-text-stroke:0.45px #8d999e;transform:scaleX(0.6750)">1</span>
<span class="t" style="left:437.20px;top:519.85px;font-size:15.5px;font-weight:400;color:#8d999e;letter-spacing:0px;-webkit-text-stroke:0.45px #8d999e;transform:scaleX(0.8889)">2</span>
<span class="t" style="left:437.20px;top:570.85px;font-size:15.5px;font-weight:400;color:#8d999e;letter-spacing:0px;-webkit-text-stroke:0.45px #8d999e;transform:scaleX(0.8889)">0</span>
<span class="t" style="left:437.20px;top:659.45px;font-size:15.5px;font-weight:400;color:#8d999e;letter-spacing:0px;-webkit-text-stroke:0.45px #8d999e;transform:scaleX(0.8889)">0</span>
<span class="t" style="left:533.29px;top:97.24px;font-size:31.5px;font-weight:400;color:#2f3d45;letter-spacing:0px;-webkit-text-stroke:1.2px #2f3d45;transform:scaleX(1.1142)">Customer: Acme Co.</span>
<span class="t" style="left:691.80px;top:182.96px;font-size:18px;font-weight:400;color:#adb2b4;letter-spacing:0px;transform:scaleX(0.9778)">Trash</span>
<span class="t" style="left:790.58px;top:182.96px;font-size:18px;font-weight:400;color:#adb2b4;letter-spacing:0px;transform:scaleX(1.0216)">Export</span>
<span class="t" style="left:1353.30px;top:183.56px;font-size:18px;font-weight:400;color:#499df3;letter-spacing:0px;-webkit-text-stroke:0.8px #499df3;transform:scaleX(1.1141)">Share with...</span>
<span class="t" style="left:883.10px;top:283.97px;font-size:16.6px;font-weight:400;color:#54626a;letter-spacing:0px;-webkit-text-stroke:0.75px #54626a;transform:scaleX(1.0000)">Code</span>
<span class="t" style="left:884.13px;top:391.77px;font-size:16.6px;font-weight:400;color:#54626a;letter-spacing:0px;-webkit-text-stroke:0.75px #54626a;transform:scaleX(1.0344)">A New Copy</span>
<span class="t" style="left:882.01px;top:499.57px;font-size:16.6px;font-weight:400;color:#54626a;letter-spacing:0px;-webkit-text-stroke:0.75px #54626a;transform:scaleX(1.0906)">My Zap Shared with Team</span>
<span class="t" style="left:883.10px;top:607.37px;font-size:16.6px;font-weight:400;color:#54626a;letter-spacing:0px;-webkit-text-stroke:0.75px #54626a;transform:scaleX(1.0675)">Zap with Locked Step</span>
<span class="t" style="left:1301.40px;top:285.73px;font-size:16px;font-weight:400;color:#ffffff;letter-spacing:0px;-webkit-text-stroke:0.95px #ffffff;transform:scaleX(1.0917)">ON</span>
<span class="t" style="left:1339.60px;top:393.63px;font-size:16px;font-weight:400;color:#ffffff;letter-spacing:0px;-webkit-text-stroke:0.95px #ffffff;transform:scaleX(1.0000)">OFF</span>
<span class="t" style="left:1339.60px;top:501.43px;font-size:16px;font-weight:400;color:#ffffff;letter-spacing:0px;-webkit-text-stroke:0.95px #ffffff;transform:scaleX(1.0000)">OFF</span>
<span class="t" style="left:1339.60px;top:609.23px;font-size:16px;font-weight:400;color:#ffffff;letter-spacing:0px;-webkit-text-stroke:0.95px #ffffff;transform:scaleX(1.0000)">OFF</span>
</body>
</html>
